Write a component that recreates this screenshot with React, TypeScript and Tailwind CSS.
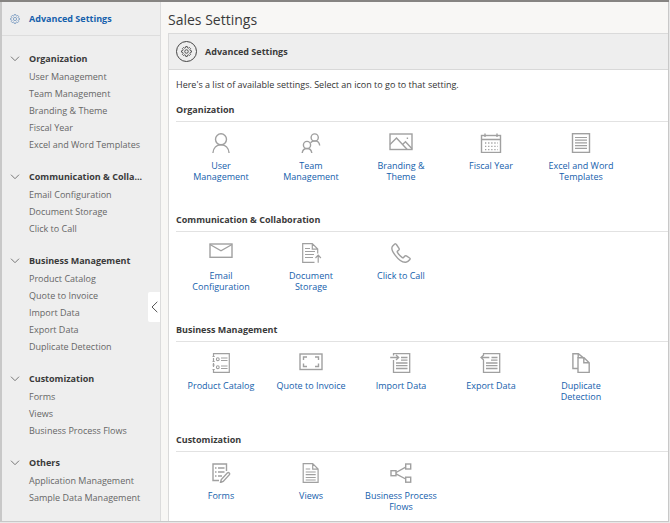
import { useState, type ReactNode } from "react";

type Item = { label: string; icon?: ReactNode };
type Group = { title: string; navTitle?: string; items: Item[] };

function Glyph({ children }: { children: ReactNode }) {
  return (
    <svg
      aria-hidden="true"
      viewBox="0 0 24 20"
      className="h-5 w-6 shrink-0 text-[#a0a0a0]"
      fill="none"
      stroke="currentColor"
      strokeWidth="1.4"
    >
      {children}
    </svg>
  );
}

const GEAR =
  "M8.6 1h2.8l.5 2.3 1.5.7 2-1.3 2 2-1.3 2 .7 1.5 2.2.5v2.6l-2.2.5-.7 1.5 1.3 2-2 2-2-1.3-1.5.7-.5 2.3H8.6l-.5-2.3-1.5-.7-2 1.3-2-2 1.3-2-.7-1.5L1 11.3V8.7l2.2-.5.7-1.5-1.3-2 2-2 2 1.3 1.5-.7z";

function Gear({ className }: { className: string }) {
  return (
    <svg
      aria-hidden="true"
      viewBox="0 0 20 20"
      className={className}
      fill="none"
      stroke="currentColor"
      strokeWidth="1.6"
      strokeLinejoin="round"
    >
      <path d={GEAR} />
      <circle cx="10" cy="10" r="3.2" />
    </svg>
  );
}

const icons = {
  user: (
    <Glyph>
      <circle cx="12" cy="6.3" r="5.5" />
      <path d="M3.9 20c.4-5 3.7-8.200 8.100-8.200s7.700 3.200 8.100 8.200" />
    </Glyph>
  ),
  team: (
    <Glyph>
      <circle cx="15.7" cy="4.5" r="3.6" />
      <circle cx="8" cy="12" r="3.6" />
      <path d="M3.2 20c.3-2.800 2.200-4.500 4.800-4.500s4.500 1.700 4.800 4.500M11.500 9.800c1-1.200 2.500-1.900 4.200-1.900 2.800 0 4.700 1.800 5 4.600" />
    </Glyph>
  ),
  image: (
    <Glyph>
      <rect x="1" y="1" width="22" height="15.5" />
      <path d="M1 11.500 7.500 5 18 16.300M13.500 11.500l3-2.700 6.500 7M17.700 5.200h1.400" />
    </Glyph>
  ),
  calendar: (
    <Glyph>
      <rect x="2.5" y="2.5" width="19" height="17" />
      <path d="M2.500 6.500h19M6 .4V4M18 .4V4" />
      <path d="M6 10h13M6 13.300h13M6 16.600h13" strokeWidth="1.3" strokeDasharray="1.3 1.8" />
    </Glyph>
  ),
  list: (
    <Glyph>
      <rect x="3.5" y=".7" width="17" height="18.7" />
      <path d="M6 4.500h12M6 7.200h12M6 9.900h12M6 12.600h12M6 15.300h12" strokeWidth="1.2" />
    </Glyph>
  ),
  mail: (
    <Glyph>
      <rect x="1" y="1" width="22" height="13.3" />
      <path d="m1 1.500 11 6.300 11-6.300" />
    </Glyph>
  ),
  upload: (
    <Glyph>
      <path
        d="M15.500 19.400H3.700V.7h9.600l5.400 5.400v4.400M13.300.7v5.400h5.400M6 5.500h5M6 8.500h10M6 11.500h9M6 14.500h8M19.200 19.700v-7M16.500 15l2.700-2.800 2.700 2.800"
        strokeWidth="1.2"
      />
    </Glyph>
  ),
  phone: (
    <Glyph>
      <path d="M5.500 1.200 3.700 2.900c-1.400 1.500-.7 5 2.200 8.900 3.100 4.200 7.600 7.700 11 7.500 1.400-.1 2.700-1.200 4-2.800.5-.6.300-1.100-.3-1.500l-3.200-2.100c-.7-.4-1.300-.3-1.800.3l-1 1.300c-.4.4-.8.4-1.300.1-2-1.400-3.700-3.200-4.900-5.200-.3-.5-.2-.9.200-1.300l1.200-1c.5-.5.6-1 .2-1.700L7.400 1.500c-.5-.8-1.200-.9-1.900-.3z" />
    </Glyph>
  ),
  catalog: (
    <Glyph>
      <path
        d="M4.500 3V.7h15.800v18.700H4.500V17M4.500 5v3M4.500 10v4M3.500 3.500h2.200M3.500 8.500h2.200M3.500 12h2.200M3.500 16.500h2.200M12 5h6.500M12 7.500h6.500M12 13h6.500M12 15.500h6.500"
        strokeWidth="1.2"
      />
      <circle cx="8.8" cy="6.2" r="1.4" strokeWidth="1.1" />
      <circle cx="8.8" cy="14.2" r="1.4" strokeWidth="1.1" />
    </Glyph>
  ),
  frame: (
    <Glyph>
      <rect x="1" y="1" width="22" height="15.5" />
      <path d="M4.500 7V4H8M16 4h3.500v3M19.500 10.500v3H16M8 13.500H4.500v-3" />
    </Glyph>
  ),
  importData: (
    <Glyph>
      <path
        d="M4.500 2.500V.7h16.200v18.700H4.500V7M1.200 4.500h8.300M7 2l2.700 2.500L7 7M12 4.500h6.500M12 7.200h6.500M7 10h11.500M7 12.700h11.500M7 15.500h11.500"
        strokeWidth="1.3"
      />
    </Glyph>
  ),
  exportData: (
    <Glyph>
      <path
        d="M4.500 2.500V.7h16.200v18.700H4.500V7M2 4.500h8.300M4.700 2 2 4.500 4.700 7M12.500 4.500h6M12 7.200h6.500M7 10h11.500M7 12.700h11.500M7 15.500h11.500"
        strokeWidth="1.3"
      />
    </Glyph>
  ),
  duplicate: (
    <Glyph>
      <path d="M9 15.500H3.900V.7h5.500l5 4.200M9.200.7v4" />
      <path d="M9 4.700h6l5.200 5v9.700H9zM14.800 4.700v5h5.400" />
    </Glyph>
  ),
  forms: (
    <Glyph>
      <path d="M10 17.500H4V1h13.500v7M6 5h1.500M9 5h6.500M6 9h1.500M9 9h6.500M6 13h1.500M9 13h4" />
      <path d="m11.500 19.500.8-3 6.200-6.700c1.300-.8 2.700.5 1.900 1.900l-6.200 6.700z" />
    </Glyph>
  ),
  page: (
    <Glyph>
      <path
        d="M4.200.7h9.500l5.400 5.400v13.300H4.200zM13.700.7v5.400h5.400M6.700 6h4.500M6.700 9h10M6.700 11.700h10M6.700 14.500h10M6.700 17h10"
        strokeWidth="1.2"
      />
    </Glyph>
  ),
  flow: (
    <Glyph>
      <rect x="2" y="7.7" width="5" height="5" />
      <rect x="16.7" y="1" width="5" height="5" />
      <rect x="16.7" y="14.2" width="5" height="5" />
      <path d="m7 9.500 9.700-5.300M7 10.800l9.700 5.200" />
    </Glyph>
  ),
};

const groups: Group[] = [
  {
    title: "Organization",
    items: [
      { label: "User Management", icon: icons.user },
      { label: "Team Management", icon: icons.team },
      { label: "Branding & Theme", icon: icons.image },
      { label: "Fiscal Year", icon: icons.calendar },
      { label: "Excel and Word Templates", icon: icons.list },
    ],
  },
  {
    title: "Communication & Collaboration",
    navTitle: "Communication & Colla...",
    items: [
      { label: "Email Configuration", icon: icons.mail },
      { label: "Document Storage", icon: icons.upload },
      { label: "Click to Call", icon: icons.phone },
    ],
  },
  {
    title: "Business Management",
    items: [
      { label: "Product Catalog", icon: icons.catalog },
      { label: "Quote to Invoice", icon: icons.frame },
      { label: "Import Data", icon: icons.importData },
      { label: "Export Data", icon: icons.exportData },
      { label: "Duplicate Detection", icon: icons.duplicate },
    ],
  },
  {
    title: "Customization",
    items: [
      { label: "Forms", icon: icons.forms },
      { label: "Views", icon: icons.page },
      { label: "Business Process Flows", icon: icons.flow },
    ],
  },
];

const others: Group = {
  title: "Others",
  items: [{ label: "Application Management" }, { label: "Sample Data Management" }],
};

function NavGroup({ group }: { group: Group }) {
  const [open, setOpen] = useState(true);
  return (
    <section className="mb-[14px]">
      <button
        type="button"
        aria-expanded={open}
        onClick={() => setOpen(!open)}
        className="flex h-[19px] w-full items-center pr-3 pl-2 text-left text-[9px] font-bold text-[#3a3a3a]"
      >
        <svg
          aria-hidden="true"
          viewBox="0 0 10 6"
          className="mr-[9px] h-[6px] w-[10px] shrink-0"
          fill="none"
          stroke="#777"
        >
          <path d="m1 .7 4 4 4-4" />
        </svg>
        <span className="whitespace-nowrap">{group.navTitle ?? group.title}</span>
      </button>
      {open && (
        <ul className="pl-[27px] text-[9px] text-[#666]">
          {group.items.map((item) => (
            <li key={item.label} className="h-[17px] leading-[17px] whitespace-nowrap">
              <a href="#">{item.label}</a>
            </li>
          ))}
        </ul>
      )}
    </section>
  );
}

function Section({ group }: { group: Group }) {
  return (
    <section className="mb-8">
      <h3 className="border-b border-[#e2e2e2] pb-[5px] text-[9px] leading-3 font-bold text-[#3a3a3a]">
        {group.title}
      </h3>
      <ul className="flex flex-wrap pt-[11px]">
        {group.items.map((item) => (
          <li key={item.label} className="w-[90px]">
            <a
              href="#"
              className="flex flex-col items-center gap-[7px] px-2 text-center text-[9px] leading-[11px] text-[#1560ac]"
            >
              {item.icon}
              <span>{item.label}</span>
            </a>
          </li>
        ))}
      </ul>
    </section>
  );
}

export default function App() {
  return (
    <div className="flex h-screen flex-col overflow-hidden border-r border-b border-[#e8e8e8] bg-[#f8f7f5] font-['Open_Sans','Noto_Sans',sans-serif]">
      <div className="h-[2px] shrink-0 bg-[#868482]" />
      <div className="flex min-h-0 flex-1 border-r border-b border-l-2 border-[#c8c8c8]">
        <aside className="relative w-[159px] shrink-0 border-r border-[#dcdcdc] bg-[#eee]">
          <a
            href="#"
            className="mb-[13px] flex h-[34px] items-center border-b border-[#ddd] pl-2 text-[9px] font-bold text-[#1560ac]"
          >
            <Gear className="mr-[9px] h-[10px] w-[10px] shrink-0 text-[#6f93bd]" />
            Advanced Settings
          </a>
          <nav aria-label="Settings">
            {[...groups, others].map((group) => (
              <NavGroup key={group.title} group={group} />
            ))}
          </nav>
          <button
            type="button"
            aria-label="Collapse navigation"
            className="absolute top-[290px] right-0 flex h-[30px] w-3 items-center justify-center rounded-l-xs bg-white"
          >
            <svg
              aria-hidden="true"
              viewBox="0 0 7 12"
              className="h-3 w-[7px]"
              fill="none"
              stroke="#555"
            >
              <path d="M6.300.8 1 6l5.300 5.200" />
            </svg>
          </button>
        </aside>
        <main className="flex min-w-0 flex-1 flex-col pl-[7px]">
          <h1 className="flex h-[31px] shrink-0 items-center pt-1 text-[14px] text-[#3a3a3a]">
            Sales Settings
          </h1>
          <div className="min-h-0 flex-1 overflow-hidden border-t border-l border-[#dadada] bg-white">
            <header className="flex h-9 items-center gap-2 border-b border-[#d8d8d8] bg-[#eee] pl-[7px]">
              <span className="flex size-[21px] items-center justify-center rounded-full border border-[#444]">
                <Gear className="size-[11px] text-[#444]" />
              </span>
              <h2 className="text-[9px] font-bold text-[#3a3a3a]">Advanced Settings</h2>
            </header>
            <div className="pl-[7px]">
              <p className="pt-2 pb-3 text-[9px] leading-[14px] text-[#333]">
                Here's a list of available settings. Select an icon to go to that setting.
              </p>
              {groups.map((group) => (
                <Section key={group.title} group={group} />
              ))}
            </div>
          </div>
        </main>
      </div>
    </div>
  );
}
